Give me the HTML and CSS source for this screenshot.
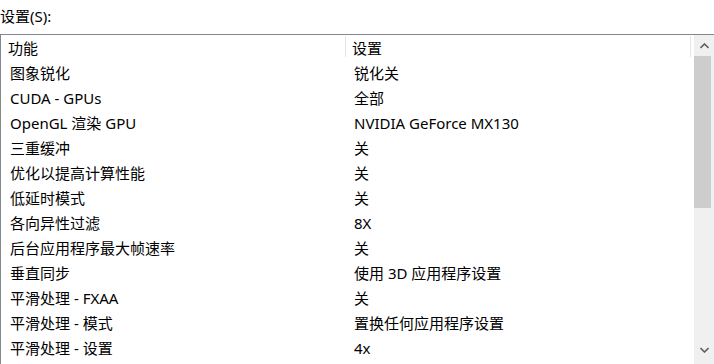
FILE: index.html
```html
<!DOCTYPE html>
<html lang="zh-CN">
<head>
<meta charset="utf-8">
<link rel="stylesheet" href="styles.css">
</head>
<body>
<div class="label">设置(S):</div>
<div class="box">
  <div class="list">
    <div class="head">
      <div class="hcell c1">功能</div>
      <div class="hcell c2">设置</div>
      <div class="hcell c3"></div>
    </div>
    <div class="row"><div class="cell c1">图象锐化</div><div class="cell c2">锐化关</div></div>
    <div class="row"><div class="cell c1">CUDA - GPUs</div><div class="cell c2">全部</div></div>
    <div class="row"><div class="cell c1">OpenGL 渲染 GPU</div><div class="cell c2">NVIDIA GeForce MX130</div></div>
    <div class="row"><div class="cell c1">三重缓冲</div><div class="cell c2">关</div></div>
    <div class="row"><div class="cell c1">优化以提高计算性能</div><div class="cell c2">关</div></div>
    <div class="row"><div class="cell c1">低延时模式</div><div class="cell c2">关</div></div>
    <div class="row"><div class="cell c1">各向异性过滤</div><div class="cell c2">8X</div></div>
    <div class="row"><div class="cell c1">后台应用程序最大帧速率</div><div class="cell c2">关</div></div>
    <div class="row"><div class="cell c1">垂直同步</div><div class="cell c2">使用 3D 应用程序设置</div></div>
    <div class="row"><div class="cell c1">平滑处理 - FXAA</div><div class="cell c2">关</div></div>
    <div class="row"><div class="cell c1">平滑处理 - 模式</div><div class="cell c2">置换任何应用程序设置</div></div>
    <div class="row"><div class="cell c1">平滑处理 - 设置</div><div class="cell c2">4x</div></div>
  </div>
  <div class="scrollbar">
    <div class="sbtn up"><svg width="9" height="6" viewBox="0 0 9 6"><path d="M0.5 5 L4.5 1 L8.5 5" fill="none" stroke="#606060" stroke-width="1.6"/></svg></div>
    <div class="thumb"></div>
    <div class="track"></div>
    <div class="sbtn down"><svg width="9" height="6" viewBox="0 0 9 6"><path d="M0.5 1 L4.5 5 L8.5 1" fill="none" stroke="#606060" stroke-width="1.6"/></svg></div>
  </div>
</div>
</body>
</html>
```
FILE: styles.css
```css
html, body {
  margin: 0;
  padding: 0;
  background: #ffffff;
  overflow: hidden;
}
body {
  width: 714px;
  height: 364px;
  font-family: "Noto Sans", "Noto Sans CJK SC", sans-serif;
  font-size: 15px;
  color: #000000;
}
.label {
  height: 34px;
  line-height: 32px;
  padding-left: 0;
}
.box {
  display: flex;
  border-top: 1px solid #828790;
  border-left: 1px solid #828790;
  height: 329px;
  width: 713px;
}
.list {
  flex: 1;
  display: flex;
  flex-direction: column;
  overflow: hidden;
}
.head {
  display: flex;
  height: 25px;
  flex: none;
}
.hcell {
  white-space: nowrap;
}
.hcell.c1 {
  width: 345px;
  padding-left: 7px;
  box-sizing: border-box;
  border-right: 1px solid #e5e5e5;
  margin-top: 1px;
  height: 21px;
  line-height: 24px;
}
.hcell.c2 {
  width: 345px;
  padding-left: 6px;
  box-sizing: border-box;
  border-right: 1px solid #e5e5e5;
  margin-top: 1px;
  height: 21px;
  line-height: 24px;
}
.row {
  display: flex;
  height: 25px;
  flex: none;
}
.cell {
  line-height: 27px;
  white-space: nowrap;
}
.cell.c1 {
  width: 345px;
  padding-left: 9px;
  box-sizing: border-box;
}
.cell.c2 {
  padding-left: 8px;
}
.scrollbar {
  width: 20px;
  flex: none;
  display: flex;
  flex-direction: column;
  background: #f0f0f0;
}
.sbtn {
  height: 21px;
  display: flex;
  align-items: center;
  justify-content: center;
  flex: none;
}
.thumb {
  height: 152px;
  margin: 0 3px 0 0;
  background: #cdcdcd;
  flex: none;
}
.track {
  flex: 1;
}
.sbtn.down {
  height: 30px;
  align-items: flex-start;
  padding-top: 13px;
  box-sizing: border-box;
}
```
